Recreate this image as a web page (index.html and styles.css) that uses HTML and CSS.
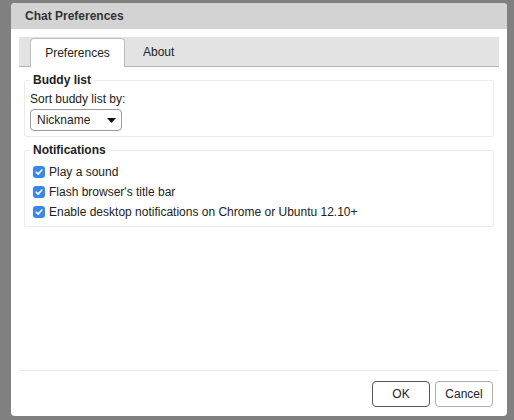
FILE: index.html
```html
<!DOCTYPE html>
<html>
<head>
<meta charset="utf-8">
<link rel="stylesheet" href="styles.css">
</head>
<body>
<div class="dialog">
  <div class="titlebar">Chat Preferences</div>
  <div class="body">
    <div class="tabs">
      <div class="tab active">Preferences</div>
      <div class="tab">About</div>
    </div>
    <fieldset class="group">
      <legend>Buddy list</legend>
      <div class="label">Sort buddy list by:</div>
      <div class="select">
        <span>Nickname</span>
        <svg width="9" height="5" viewBox="0 0 9 5"><path d="M0 0H9L4.5 5Z" fill="#111"/></svg>
      </div>
    </fieldset>
    <fieldset class="group">
      <legend>Notifications</legend>
      <label class="check"><span class="box"><svg width="12" height="12" viewBox="0 0 12 12"><path d="M3.2 6.2L5.1 8.1L8.9 4" fill="none" stroke="#fff" stroke-width="1.6" stroke-linecap="round" stroke-linejoin="round"/></svg></span>Play a sound</label>
      <label class="check"><span class="box"><svg width="12" height="12" viewBox="0 0 12 12"><path d="M3.2 6.2L5.1 8.1L8.9 4" fill="none" stroke="#fff" stroke-width="1.6" stroke-linecap="round" stroke-linejoin="round"/></svg></span>Flash browser's title bar</label>
      <label class="check"><span class="box"><svg width="12" height="12" viewBox="0 0 12 12"><path d="M3.2 6.2L5.1 8.1L8.9 4" fill="none" stroke="#fff" stroke-width="1.6" stroke-linecap="round" stroke-linejoin="round"/></svg></span>Enable desktop notifications on Chrome or Ubuntu 12.10+</label>
    </fieldset>
    <div class="spacer"></div>
    <div class="footer">
      <button class="btn primary">OK</button>
      <button class="btn">Cancel</button>
    </div>
  </div>
</div>
</body>
</html>
```
FILE: styles.css
```css
html, body {
  margin: 0;
  padding: 0;
  background: #808080;
  font-family: "Liberation Sans", Arial, Helvetica, sans-serif;
  font-size: 12px;
  color: #222;
}
.dialog {
  width: 496px;
  height: 413px;
  margin: 3px 0 0 11px;
  background: #fff;
  border-radius: 4px;
  display: flex;
  flex-direction: column;
  overflow: hidden;
}
.titlebar {
  height: 26px;
  line-height: 26px;
  background: #d3d3d3;
  padding-left: 14px;
  font-weight: bold;
  font-size: 12px;
  color: #333;
  flex: none;
}
.body {
  flex: 1;
  display: flex;
  flex-direction: column;
  padding: 8px 8px 0 8px;
}
.tabs {
  flex: none;
  height: 29px;
  background: #e3e3e3;
  border-bottom: 1px solid #b3b3b3;
  display: flex;
  align-items: flex-end;
  padding-left: 11px;
}
.tab {
  height: 28px;
  line-height: 28px;
  padding: 0 18px;
  color: #222;
  box-sizing: border-box;
}
.tab.active {
  width: 95px;
  padding: 0;
  text-align: center;
  background: #fff;
  border: 1px solid #bdbdbd;
  border-bottom: none;
  border-radius: 4px 4px 0 0;
  height: 29px;
  margin-bottom: -1px;
  line-height: 28px;
}
.group {
  flex: none;
  margin: 6px 5px 0 5px;
  padding: 5px 5px 5px 5px;
  border: 1px solid #ececec;
  border-radius: 2px;
  min-width: 0;
}
.group legend {
  padding: 0 3px;
  font-weight: bold;
  line-height: 14px;
  color: #222;
}
.label {
  line-height: 14px;
}
.select {
  margin-top: 3px;
  width: 92px;
  height: 22px;
  box-sizing: border-box;
  border: 1px solid #9a9a9a;
  border-radius: 4px;
  display: flex;
  align-items: center;
  justify-content: space-between;
  padding: 0 5px 0 6px;
  background: #fff;
}
.select svg {
  display: block;
}
.check {
  display: flex;
  align-items: center;
  height: 20px;
  padding-left: 3px;
}
.box {
  width: 12px;
  height: 12px;
  border-radius: 3px;
  background: #3a87e6;
  margin-right: 4px;
  display: block;
  flex: none;
}
.box svg {
  display: block;
}
.group:last-of-type {
  padding-bottom: 4px;
}
.spacer {
  flex: 1;
}
.footer {
  flex: none;
  border-top: 1px solid #ececec;
  display: flex;
  justify-content: flex-end;
  gap: 5px;
  padding: 10px 6px 9px 0;
}
.btn {
  font-family: "Liberation Sans", Arial, Helvetica, sans-serif;
  font-size: 12px;
  color: #222;
  width: 58px;
  height: 26px;
  background: #fff;
  border: 1px solid #acacac;
  border-radius: 4px;
  padding: 0;
}
.btn.primary {
  border-color: #555;
}
```
